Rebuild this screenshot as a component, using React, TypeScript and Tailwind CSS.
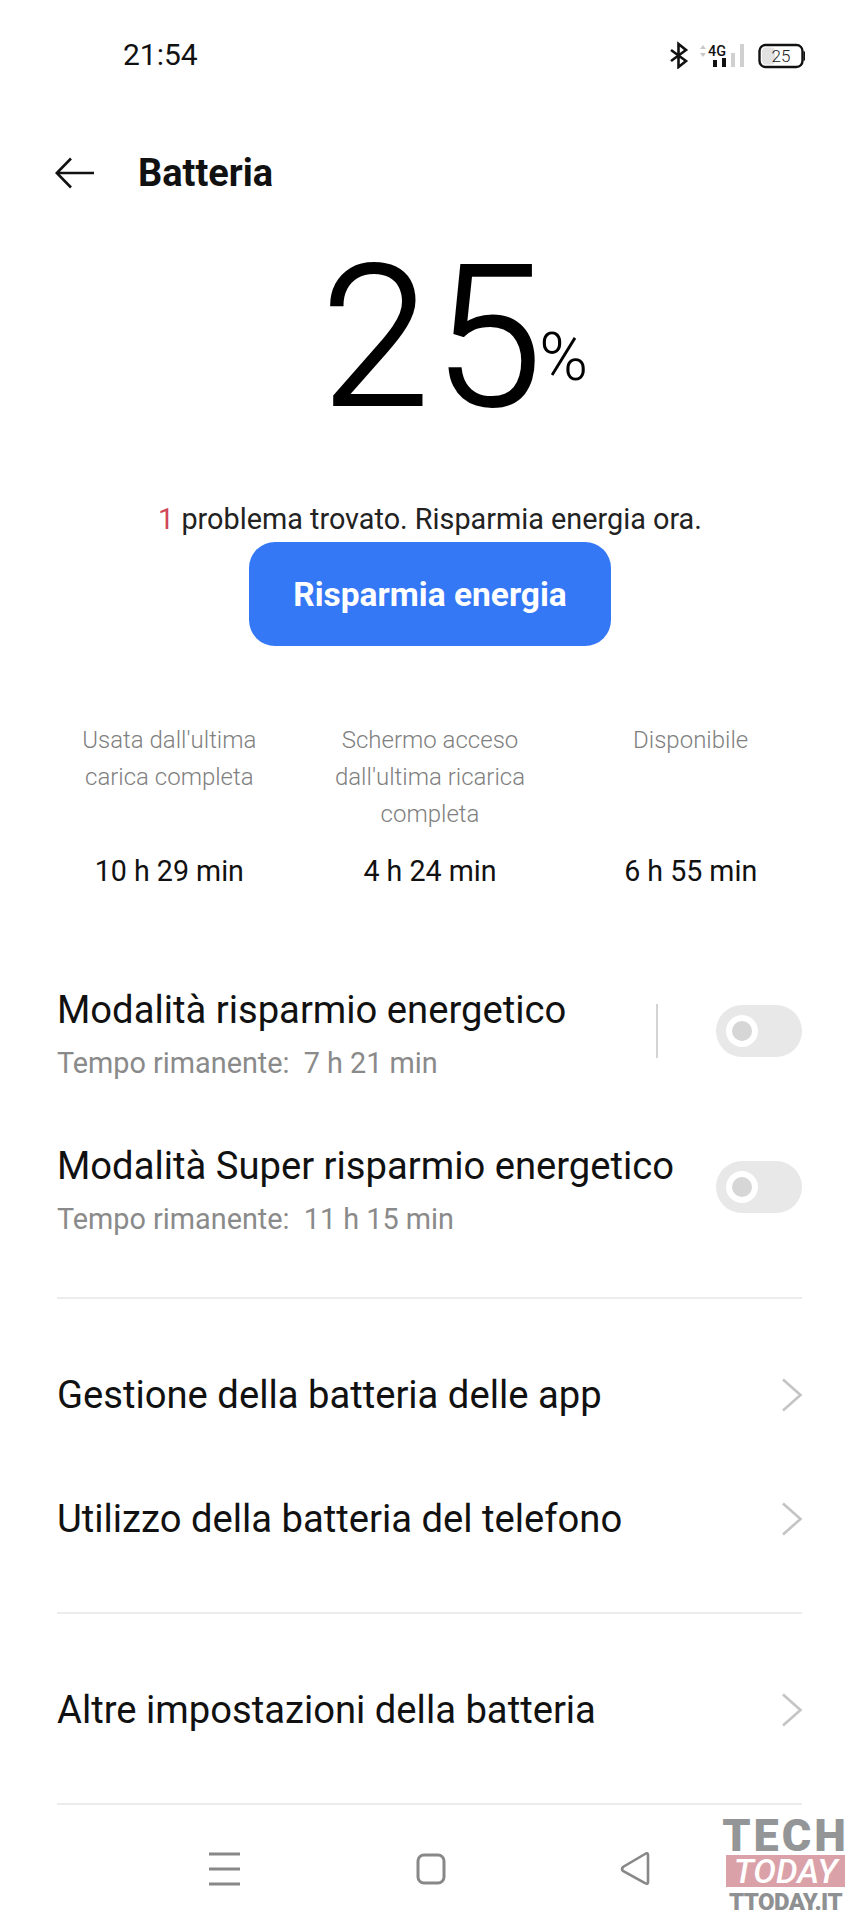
function Toggle({ className = '' }: { className?: string }) {
  return (
    <div className={`flex h-[52px] w-[86px] shrink-0 items-center rounded-full bg-[#e8e8e8] pl-[10px] ${className}`}>
      <div className="flex h-[32px] w-[32px] items-center justify-center rounded-full border-[6px] border-white bg-[#d6d6d6]" />
    </div>
  );
}

function StatusIcons() {
  return (
    <svg width="136" height="28" viewBox="0 0 136 28" fill="none">
      {/* bluetooth */}
      <path d="M2 9 L17 20 L9.5 26 V3 L17 9 L2 20" stroke="#111" strokeWidth="2.6" />
      {/* up/down arrows */}
      <path d="M31 8 l3 -4 l3 4 z M31 12 l3 4 l3 -4 z" fill="#c8c8c8" />
      <text x="39" y="15" fontSize="14" fontWeight="500" textLength="18" lengthAdjust="spacingAndGlyphs" fontFamily="Roboto, sans-serif" fill="#111">4G</text>
      <rect x="44" y="19" width="4" height="7" fill="#111" />
      <rect x="53" y="17" width="4" height="9" fill="#111" />
      <rect x="62" y="12" width="4" height="14" fill="#d0d0d0" />
      <rect x="71" y="3" width="4" height="23" fill="#d0d0d0" />
      {/* battery */}
      <rect x="90.5" y="4" width="43" height="22" rx="6" fill="#fff" stroke="#111" strokeWidth="2.4" />
      <rect x="93" y="6.5" width="13" height="17" rx="4" fill="#e2e2e2" />
      <rect x="134.5" y="10.5" width="2" height="9" fill="#111" />
      <text x="112" y="21" textAnchor="middle" fontSize="17" fontWeight="300" fontFamily="Roboto, sans-serif" fill="#222">25</text>
    </svg>
  );
}

const stats = [
  { label: ["Usata dall'ultima", 'carica completa'], value: '10 h 29 min' },
  { label: ['Schermo acceso', "dall'ultima ricarica", 'completa'], value: '4 h 24 min' },
  { label: ['Disponibile'], value: '6 h 55 min' },
];

function LinkRow({ title, className }: { title: string; className: string }) {
  return (
    <div className={`flex h-[44px] items-center justify-between ${className}`}>
      <span className="text-[38.2px] leading-[44px] text-[#111]">{title}</span>
      <svg className="mr-[-1px]" width="22" height="34" viewBox="0 0 22 34" fill="none" stroke="#c4c4c4" strokeWidth="2.6">
        <path d="M2 1.5 L19.5 17 L2 32.5" />
      </svg>
    </div>
  );
}

export default function App() {
  return (
    <div className="relative h-[1920px] w-[860px] overflow-hidden bg-white font-['Roboto',sans-serif] text-black">
      {/* Status bar */}
      <div className="flex h-[110px] items-center justify-between pl-[123px] pr-[55px]">
        <span className="text-[30px] leading-[36px] text-[#111]">21:54</span>
        <StatusIcons />
      </div>

      {/* Title */}
      <div className="flex h-[126px] items-center pl-[55px]">
        <svg width="40" height="32" viewBox="0 0 40 32" fill="none" stroke="#111" strokeWidth="2.6">
          <path d="M39 16 H2 M16 1.5 L1.8 16 L16 30.5" />
        </svg>
        <span className="ml-[43px] text-[38px] font-bold leading-[44px] text-[#111]">Batteria</span>
      </div>

      {/* Percent */}
      <div className="flex h-[265px] items-start justify-center pl-[49px]">
        <span className="mt-[-13px] text-[196px] font-light leading-[230px] tracking-[4px] text-black [-webkit-text-stroke:2px_#000]">25</span>
        <span className="mt-[80px] ml-[-7px] text-[66px] font-light leading-[84px] text-black">%</span>
      </div>

      <p className="text-center text-[28.8px] leading-[36px] text-[#222]">
        <span className="text-[#d0475a]">1</span> problema trovato. Risparmia energia ora.
      </p>

      <div className="mt-[5px] flex justify-center">
        <button className="flex h-[104px] w-[362px] items-center justify-center rounded-[26px] bg-[#3478f6] pt-[3px] text-[33.5px] font-bold text-white">
          Risparmia energia
        </button>
      </div>

      {/* Stats */}
      <div className="mt-[76px] grid grid-cols-3 px-[39px]">
        {stats.map((s) => (
          <div key={s.value} className="flex flex-col items-center text-center">
            <div className="h-[113px] text-[24px] font-light leading-[37px] text-[#808080]">
              {s.label.map((l) => (
                <div key={l}>{l}</div>
              ))}
            </div>
            <div className="mt-[19px] text-[28.6px] leading-[34px] text-[#111]">{s.value}</div>
          </div>
        ))}
      </div>

      {/* Saver modes */}
      <div className="mt-[100px] pl-[57px] pr-[58px]">
        <div className="flex items-center">
          <div className="flex-1">
            <div className="text-[38.2px] leading-[44px] text-[#111]">Modalità risparmio energetico</div>
            <div className="mt-[14px] text-[28.8px] leading-[34px] text-[#8a8a8a]">Tempo rimanente:&nbsp; 7 h 21 min</div>
          </div>
          <div className="mr-[58px] mb-[7px] h-[54px] w-[2px] bg-[#d4d4d4]" />
          <Toggle className="mb-[7px]" />
        </div>
        <div className="mt-[64px] flex items-center">
          <div className="flex-1">
            <div className="text-[38.2px] leading-[44px] text-[#111]">Modalità Super risparmio energetico</div>
            <div className="mt-[14px] text-[28.8px] leading-[34px] text-[#8a8a8a]">Tempo rimanente:&nbsp; 11 h 15 min</div>
          </div>
          <Toggle className="mb-[7px]" />
        </div>

        <div className="mt-[61px] h-[2px] bg-[#ececec]" />
        <LinkRow title="Gestione della batteria delle app" className="mt-[74px]" />
        <LinkRow title="Utilizzo della batteria del telefono" className="mt-[80px]" />
        <div className="mt-[71px] h-[2px] bg-[#ececec]" />
        <LinkRow title="Altre impostazioni della batteria" className="mt-[74px]" />
        <div className="mt-[71px] h-[2px] bg-[#ececec]" />
      </div>

      {/* Nav bar */}
      <svg className="absolute left-[206px] top-[1851px]" width="450" height="36" viewBox="0 0 450 36" fill="none" stroke="#888" strokeWidth="3">
        <path d="M3 3 H34 M3 18 H34 M3 33 H34" />
        <rect x="212" y="4" width="26" height="28" rx="6" />
        <path d="M442 4 V31 Q442 34 439 32 L417 20 Q415 18 417 16 L439 3 Q442 1 442 4 Z" strokeWidth="2.6" />
      </svg>

      {/* Watermark */}
      <div className="absolute left-[726px] top-[1817px] flex w-[119px] flex-col items-center">
        <div className="text-[45px] font-black leading-[38px] tracking-[3px] text-[#949597]">TECH</div>
        <div className="flex h-[32px] w-[119px] items-center justify-center bg-[#dba1a9] text-[34px] font-medium italic leading-[32px] text-white">TODAY</div>
        <div className="mt-[3px] text-[24px] font-black leading-[24px] tracking-[-0.6px] text-[#8f9092]">TTODAY.IT</div>
      </div>
    </div>
  );
}
